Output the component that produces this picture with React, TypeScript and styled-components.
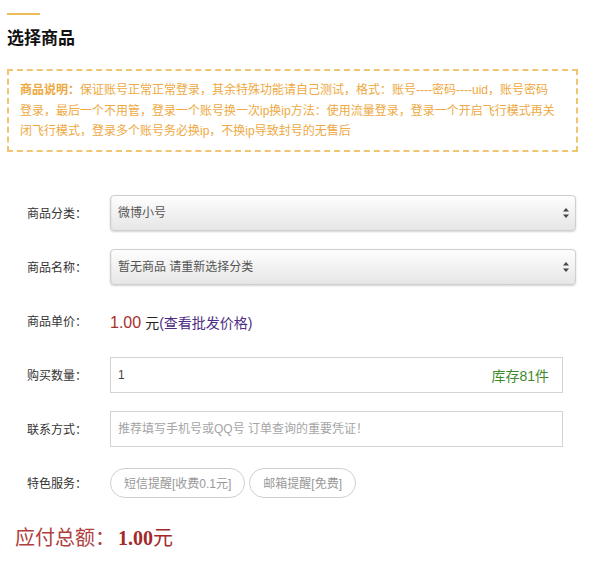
import React from "react";
import styled, { createGlobalStyle } from "styled-components";

const GlobalStyle = createGlobalStyle`
  html, body { margin: 0; padding: 0; background: #fff; }
  body { font-family: "Liberation Sans", "Noto Sans CJK SC", sans-serif; color: #333; }
  * { box-sizing: border-box; }
`;

const Page = styled.div`
  width: 600px;
  height: 566px;
  padding: 13px 22px 0 7px;
  overflow: hidden;
`;

const GoldBar = styled.div`
  width: 33px;
  height: 2px;
  background: #ecbd58;
`;

const Title = styled.h2`
  margin: 12px 0 0;
  font-size: 17px;
  line-height: 24px;
  font-weight: 700;
  color: #111;
`;

const Notice = styled.div`
  margin-top: 18px;
  width: 571px;
  border: 2px dashed #f0c470;
  padding: 9px 21px 8px 11px;
  font-size: 12px;
  line-height: 20.5px;
  color: #eea942;
`;

const NoticeLead = styled.strong`
  font-weight: 700;
`;

const Form = styled.div`
  margin-top: 43px;
  padding-left: 20px;
  display: flex;
  flex-direction: column;
  gap: 18px;
`;

const Row = styled.div`
  display: flex;
  align-items: center;
  height: 36px;
`;

const Label = styled.div`
  width: 83px;
  flex: none;
  font-size: 12px;
  color: #333;
`;

const Field = styled.div<{ $w: number }>`
  position: relative;
  width: ${(p) => p.$w}px;
  height: 36px;
`;

const Select = styled.select`
  appearance: none;
  -webkit-appearance: none;
  width: 100%;
  height: 100%;
  padding: 0 24px 0 7px;
  border: 1px solid #cfcfcf;
  border-radius: 4px;
  background: linear-gradient(to bottom, #fefefe 0%, #f3f3f3 45%, #e6e6e6 100%);
  box-shadow: 0 1px 2px rgba(0, 0, 0, 0.18), inset 1px 0 0 rgba(0, 0, 0, 0.04);
  font-family: inherit;
  font-size: 12px;
  color: #555;
  outline: none;
`;

const Arrow = styled.svg`
  position: absolute;
  right: 6px;
  top: 50%;
  transform: translateY(-50%);
  pointer-events: none;
`;

const Input = styled.input`
  width: 100%;
  height: 100%;
  padding: 0 7px;
  border: 1px solid #d3d3d3;
  border-radius: 0;
  background: #fff;
  font-family: inherit;
  font-size: 12px;
  color: #444;
  outline: none;
  &::placeholder { color: #a5a5a5; }
`;

const Stock = styled.span`
  position: absolute;
  right: 14px;
  top: 50%;
  transform: translateY(-50%);
  font-size: 14px;
  color: #3f8a2c;
`;

const Price = styled.div`
  display: flex;
  align-items: baseline;
  font-size: 14px;
  padding-top: 2px;
`;

const PriceNum = styled.span`
  font-size: 16px;
  color: #a8302e;
  margin-right: 4px;
`;

const Yuan = styled.span`
  color: #222;
`;

const WholesaleLink = styled.a`
  color: #4d2c86;
  text-decoration: none;
`;

const Pills = styled.div`
  display: flex;
  gap: 4px;
`;

const Pill = styled.button`
  height: 30px;
  padding: 0 13px;
  border: 1px solid #cfcfcf;
  border-radius: 15px;
  background: #fff;
  font-family: inherit;
  font-size: 12px;
  color: #999;
  cursor: pointer;
`;

const Total = styled.div`
  margin-top: 23px;
  padding-left: 8px;
  display: flex;
  align-items: baseline;
  line-height: 28px;
`;

const TotalLabel = styled.span`
  font-size: 20px;
  color: #b0403e;
`;

const TotalAmount = styled.span`
  margin-left: 3px;
  font-size: 20px;
  color: #a32a2a;
  font-weight: 700;
  font-family: "Liberation Serif", "Noto Sans CJK SC", serif;
`;

const TotalUnit = styled.span`
  font-weight: 400;
  font-family: "Liberation Sans", "Noto Sans CJK SC", sans-serif;
`;

const SelectArrow = () => (
  <Arrow width="8" height="12" viewBox="0 0 8 12">
    <path d="M4 1 L7 4.6 L1 4.6 Z" fill="#444" />
    <path d="M4 11 L7 7.4 L1 7.4 Z" fill="#444" />
  </Arrow>
);

export default function App() {
  return (
    <>
      <GlobalStyle />
      <Page>
        <GoldBar />
        <Title>选择商品</Title>
        <Notice>
          <NoticeLead>商品说明：</NoticeLead>
          保证账号正常正常登录，其余特殊功能请自己测试，格式：账号----密码----uid，账号密码登录，最后一个不用管，登录一个账号换一次ip换ip方法：使用流量登录，登录一个开启飞行模式再关闭飞行模式，登录多个账号务必换ip，不换ip导致封号的无售后
        </Notice>
        <Form>
          <Row>
            <Label>商品分类：</Label>
            <Field $w={466}>
              <Select defaultValue="weibo">
                <option value="weibo">微博小号</option>
              </Select>
              <SelectArrow />
            </Field>
          </Row>
          <Row>
            <Label>商品名称：</Label>
            <Field $w={466}>
              <Select defaultValue="none">
                <option value="none">暂无商品 请重新选择分类</option>
              </Select>
              <SelectArrow />
            </Field>
          </Row>
          <Row>
            <Label>商品单价：</Label>
            <Price>
              <PriceNum>1.00</PriceNum>
              <Yuan>元</Yuan>
              <WholesaleLink href="#">(查看批发价格)</WholesaleLink>
            </Price>
          </Row>
          <Row>
            <Label>购买数量：</Label>
            <Field $w={453}>
              <Input defaultValue="1" />
              <Stock>库存81件</Stock>
            </Field>
          </Row>
          <Row>
            <Label>联系方式：</Label>
            <Field $w={453}>
              <Input placeholder="推荐填写手机号或QQ号 订单查询的重要凭证！" />
            </Field>
          </Row>
          <Row>
            <Label>特色服务：</Label>
            <Pills>
              <Pill>短信提醒[收费0.1元]</Pill>
              <Pill>邮箱提醒[免费]</Pill>
            </Pills>
          </Row>
        </Form>
        <Total>
          <TotalLabel>应付总额：</TotalLabel>
          <TotalAmount>
            1.00<TotalUnit>元</TotalUnit>
          </TotalAmount>
        </Total>
      </Page>
    </>
  );
}
